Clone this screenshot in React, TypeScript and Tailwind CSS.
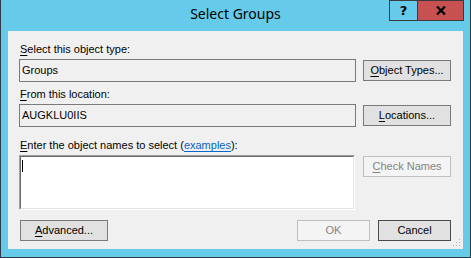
import React from "react";

const U = ({ children }: { children: React.ReactNode }) => (
  <span className="underline underline-offset-[2px] decoration-[1px]">{children}</span>
);

function Btn({
  children,
  disabled,
  strong,
  className = "",
}: {
  children: React.ReactNode;
  disabled?: boolean;
  strong?: boolean;
  className?: string;
}) {
  const cls = disabled
    ? "bg-[#f4f4f4] border-[#bfbfbf] text-[#838383]"
    : strong
    ? "bg-[#e1e1e1] border-[#4a4a4a] text-black"
    : "bg-[#e1e1e1] border-[#7a7a7a] text-black";
  return (
    <div
      className={`h-[21px] border flex items-center justify-center leading-[13px] shrink-0 ${cls} ${className}`}
    >
      {children}
    </div>
  );
}

export default function App() {
  return (
    <div className="w-[471px] h-[258px] bg-[#66cbea] border-l border-r border-b border-[#2d3a44] relative flex flex-col font-['Liberation_Sans',Arial,sans-serif] text-[11px] text-black">
      {/* Title bar */}
      <div className="h-[31px] shrink-0 flex justify-center items-start pt-[4px]">
        <span className="font-['Noto_Sans',sans-serif] text-[14px] leading-[19px] text-black">
          Select Groups
        </span>
      </div>
      <div className="absolute top-0 right-[6px] flex h-[21px]">
        <div className="w-[29px] h-[21px] border border-[#3a3a3a] bg-[#66cbea] flex items-center justify-center font-['DejaVu_Sans',sans-serif] font-bold text-[13px] leading-none">
          ?
        </div>
        <div className="w-[46px] h-[21px] border border-l-0 border-[#3a3a3a] bg-[#c75050] flex items-center justify-center">
          <svg width="10" height="9" viewBox="0 0 10 9">
            <path d="M1 0.5 L9 8.5 M9 0.5 L1 8.5" stroke="#000" strokeWidth="2.2" />
          </svg>
        </div>
      </div>

      {/* Client area */}
      <div className="mx-[7px] h-[218px] bg-[#f0f0f0] relative flex flex-col pt-[12px] pl-[11px] pr-[12px]">
        <div className="leading-[13px] pl-px">
          <U>S</U>elect this object type:
        </div>
        <div className="mt-[3px] flex items-center gap-[7px]">
          <div className="flex-1 h-[23px] border border-[#7a7a7a] flex items-center pl-[2px] leading-[13px]">
            Groups
          </div>
          <Btn className="w-[88px]">
            <span>
              <U>O</U>bject Types...
            </span>
          </Btn>
        </div>

        <div className="mt-[6px] leading-[13px] pl-px">
          <U>F</U>rom this location:
        </div>
        <div className="mt-[3px] flex items-center gap-[7px]">
          <div className="flex-1 h-[23px] border border-[#7a7a7a] flex items-center pl-[2px] leading-[13px]">
            AUGKLU0IIS
          </div>
          <Btn className="w-[88px]">
            <span>
              <U>L</U>ocations...
            </span>
          </Btn>
        </div>

        <div className="mt-[12px] leading-[13px] pl-px">
          <U>E</U>nter the object names to select (
          <span className="text-[#0066cc] underline underline-offset-[2px]">examples</span>):
        </div>
        <div className="mt-[3px] flex items-start gap-[8px]">
          <div className="flex-1 h-[55px] border-t border-l border-[#a0a0a0] border-b border-r border-b-[#ffffff] border-r-[#ffffff]">
            <div className="h-full border-t border-l border-[#696969] border-b border-r border-b-[#e3e3e3] border-r-[#e3e3e3] bg-white pl-[1px] pt-[3px]">
              <div className="w-px h-[12px] bg-black" />
            </div>
          </div>
          <Btn disabled className="w-[88px] mt-px">
            <span>
              <U>C</U>heck Names
            </span>
          </Btn>
        </div>

        <div className="mt-[10px] flex items-center">
          <Btn className="w-[88px] ml-px">
            <span>
              <U>A</U>dvanced...
            </span>
          </Btn>
          <div className="flex-1" />
          <Btn disabled className="w-[73px]">
            OK
          </Btn>
          <Btn strong className="w-[73px] ml-[8px]">
            Cancel
          </Btn>
        </div>

        <svg
          className="absolute right-[2px] bottom-[2px]"
          width="9"
          height="9"
          viewBox="0 0 9 9"
        >
          <rect x="7" y="1" width="1" height="1" fill="#b0b0b0" />
          <rect x="7" y="4" width="1" height="1" fill="#b0b0b0" />
          <rect x="4" y="4" width="1" height="1" fill="#b0b0b0" />
          <rect x="7" y="7" width="1" height="1" fill="#b0b0b0" />
          <rect x="4" y="7" width="1" height="1" fill="#b0b0b0" />
          <rect x="1" y="7" width="1" height="1" fill="#b0b0b0" />
        </svg>
      </div>
    </div>
  );
}
